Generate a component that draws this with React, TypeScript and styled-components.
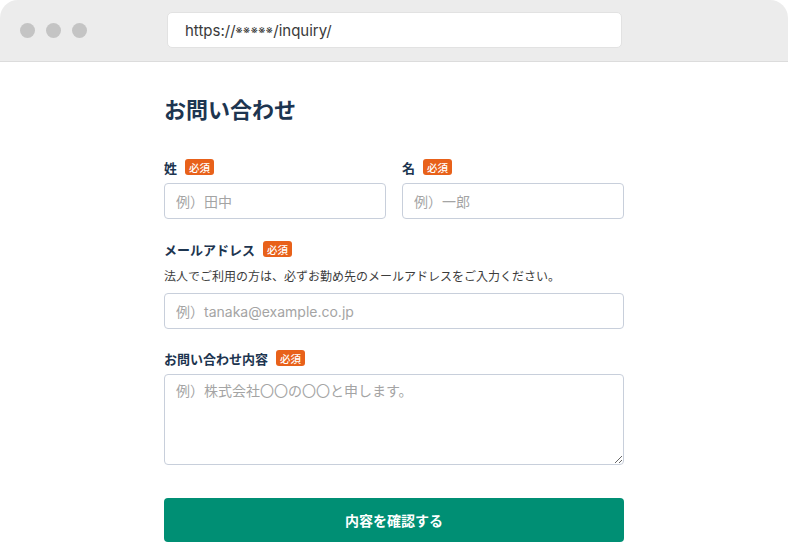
import styled, { createGlobalStyle } from "styled-components";

const GlobalStyle = createGlobalStyle`
    html, body {
        margin: 0;
        padding: 0;
        background: #ffffff;
    }
    body {
        font-family: Inter, "Noto Sans CJK JP", sans-serif;
        -webkit-font-smoothing: antialiased;
    }
    * {
        box-sizing: border-box;
    }
`;

const Frame = styled.div`
    width: 788px;
    height: 560px;
    overflow: hidden;
    background: #ffffff;
`;

const TopBar = styled.div`
    height: 62px;
    background: #ececec;
    border-bottom: 1px solid #dcdcdc;
    border-radius: 18px 18px 0 0;
    display: flex;
    align-items: center;
    padding: 0 0 0 20px;
`;

const Dots = styled.div`
    display: flex;
    gap: 11px;
    width: 147px;
`;

const Dot = styled.span`
    width: 15px;
    height: 15px;
    border-radius: 50%;
    background: #c4c4c4;
`;

const AddressBar = styled.div`
    width: 455px;
    height: 36px;
    background: #ffffff;
    border: 1px solid #e2e2e2;
    border-radius: 5px;
    display: flex;
    align-items: center;
    padding-left: 17px;
    font-size: 15px;
    color: #3a3a3a;
    font-family: Inter, "Noto Sans CJK JP", sans-serif;
    margin-top: -1px;
`;

const Mark = styled.span`
    font-size: 11px;
    letter-spacing: 0.5px;
`;

const Page = styled.main`
    width: 460px;
    margin: 0 auto;
    padding-top: 30px;
`;

const Title = styled.h1`
    margin: 0 0 34px;
    font-size: 22px;
    line-height: 32px;
    font-weight: 700;
    color: #1d3550;
    font-family: "Noto Sans CJK JP", sans-serif;
`;

const Row = styled.div`
    display: grid;
    grid-template-columns: 1fr 1fr;
    gap: 16px;
`;

const Field = styled.div<{ $gap?: number }>`
    display: flex;
    flex-direction: column;
    margin-bottom: ${(p) => p.$gap ?? 0}px;
`;

const Label = styled.div`
    display: flex;
    align-items: center;
    gap: 8px;
    height: 18px;
    margin-bottom: 7px;
    font-size: 13px;
    font-weight: 700;
    color: #1d3550;
    font-family: "Noto Sans CJK JP", sans-serif;
`;

const Badge = styled.span`
    display: inline-flex;
    align-items: center;
    justify-content: center;
    height: 16px;
    padding: 0 4px;
    border-radius: 3px;
    background: #e8611a;
    color: #ffffff;
    font-size: 10.5px;
    font-weight: 500;
    font-family: "Noto Sans CJK JP", sans-serif;
`;

const Help = styled.p`
    margin: 2px 0 9px;
    font-size: 12px;
    line-height: 17px;
    color: #3c3c3c;
    font-family: "Noto Sans CJK JP", sans-serif;
`;

const Input = styled.input`
    width: 100%;
    height: 36px;
    border: 1px solid #c8cfdb;
    border-radius: 4px;
    padding: 0 11px;
    font-size: 14px;
    font-family: Inter, "Noto Sans CJK JP", sans-serif;
    color: #333;
    background: #fff;
    outline: none;
    &::placeholder {
        color: #a4a4a4;
    }
`;

const TextArea = styled.textarea`
    width: 100%;
    height: 91px;
    border: 1px solid #c8cfdb;
    border-radius: 4px;
    padding: 6px 11px;
    font-size: 14px;
    line-height: 20px;
    font-family: Inter, "Noto Sans CJK JP", sans-serif;
    color: #333;
    background: #fff;
    outline: none;
    resize: vertical;
    display: block;
    &::placeholder {
        color: #a4a4a4;
    }
`;

const Submit = styled.button`
    width: 100%;
    height: 44px;
    margin-top: 33px;
    border: none;
    border-radius: 4px;
    background: #008f74;
    color: #ffffff;
    font-size: 14px;
    font-weight: 700;
    font-family: "Noto Sans CJK JP", sans-serif;
    cursor: pointer;
`;

function App() {
    return (
        <Frame>
            <GlobalStyle />
            <TopBar>
                <Dots>
                    <Dot />
                    <Dot />
                    <Dot />
                </Dots>
                <AddressBar>
                    https://<Mark>※※※※※</Mark>/inquiry/
                </AddressBar>
            </TopBar>
            <Page>
                <Title>お問い合わせ</Title>
                <Row>
                    <Field $gap={21}>
                        <Label>姓<Badge>必須</Badge></Label>
                        <Input placeholder="例）田中" />
                    </Field>
                    <Field $gap={21}>
                        <Label>名<Badge>必須</Badge></Label>
                        <Input placeholder="例）一郎" />
                    </Field>
                </Row>
                <Field $gap={20}>
                    <Label>メールアドレス<Badge>必須</Badge></Label>
                    <Help>法人でご利用の方は、必ずお勤め先のメールアドレスをご入力ください。</Help>
                    <Input placeholder="例）tanaka@example.co.jp" />
                </Field>
                <Field>
                    <Label>お問い合わせ内容<Badge>必須</Badge></Label>
                    <TextArea placeholder="例）株式会社〇〇の〇〇と申します。" />
                </Field>
                <Submit>内容を確認する</Submit>
            </Page>
        </Frame>
    );
}

export default App;
